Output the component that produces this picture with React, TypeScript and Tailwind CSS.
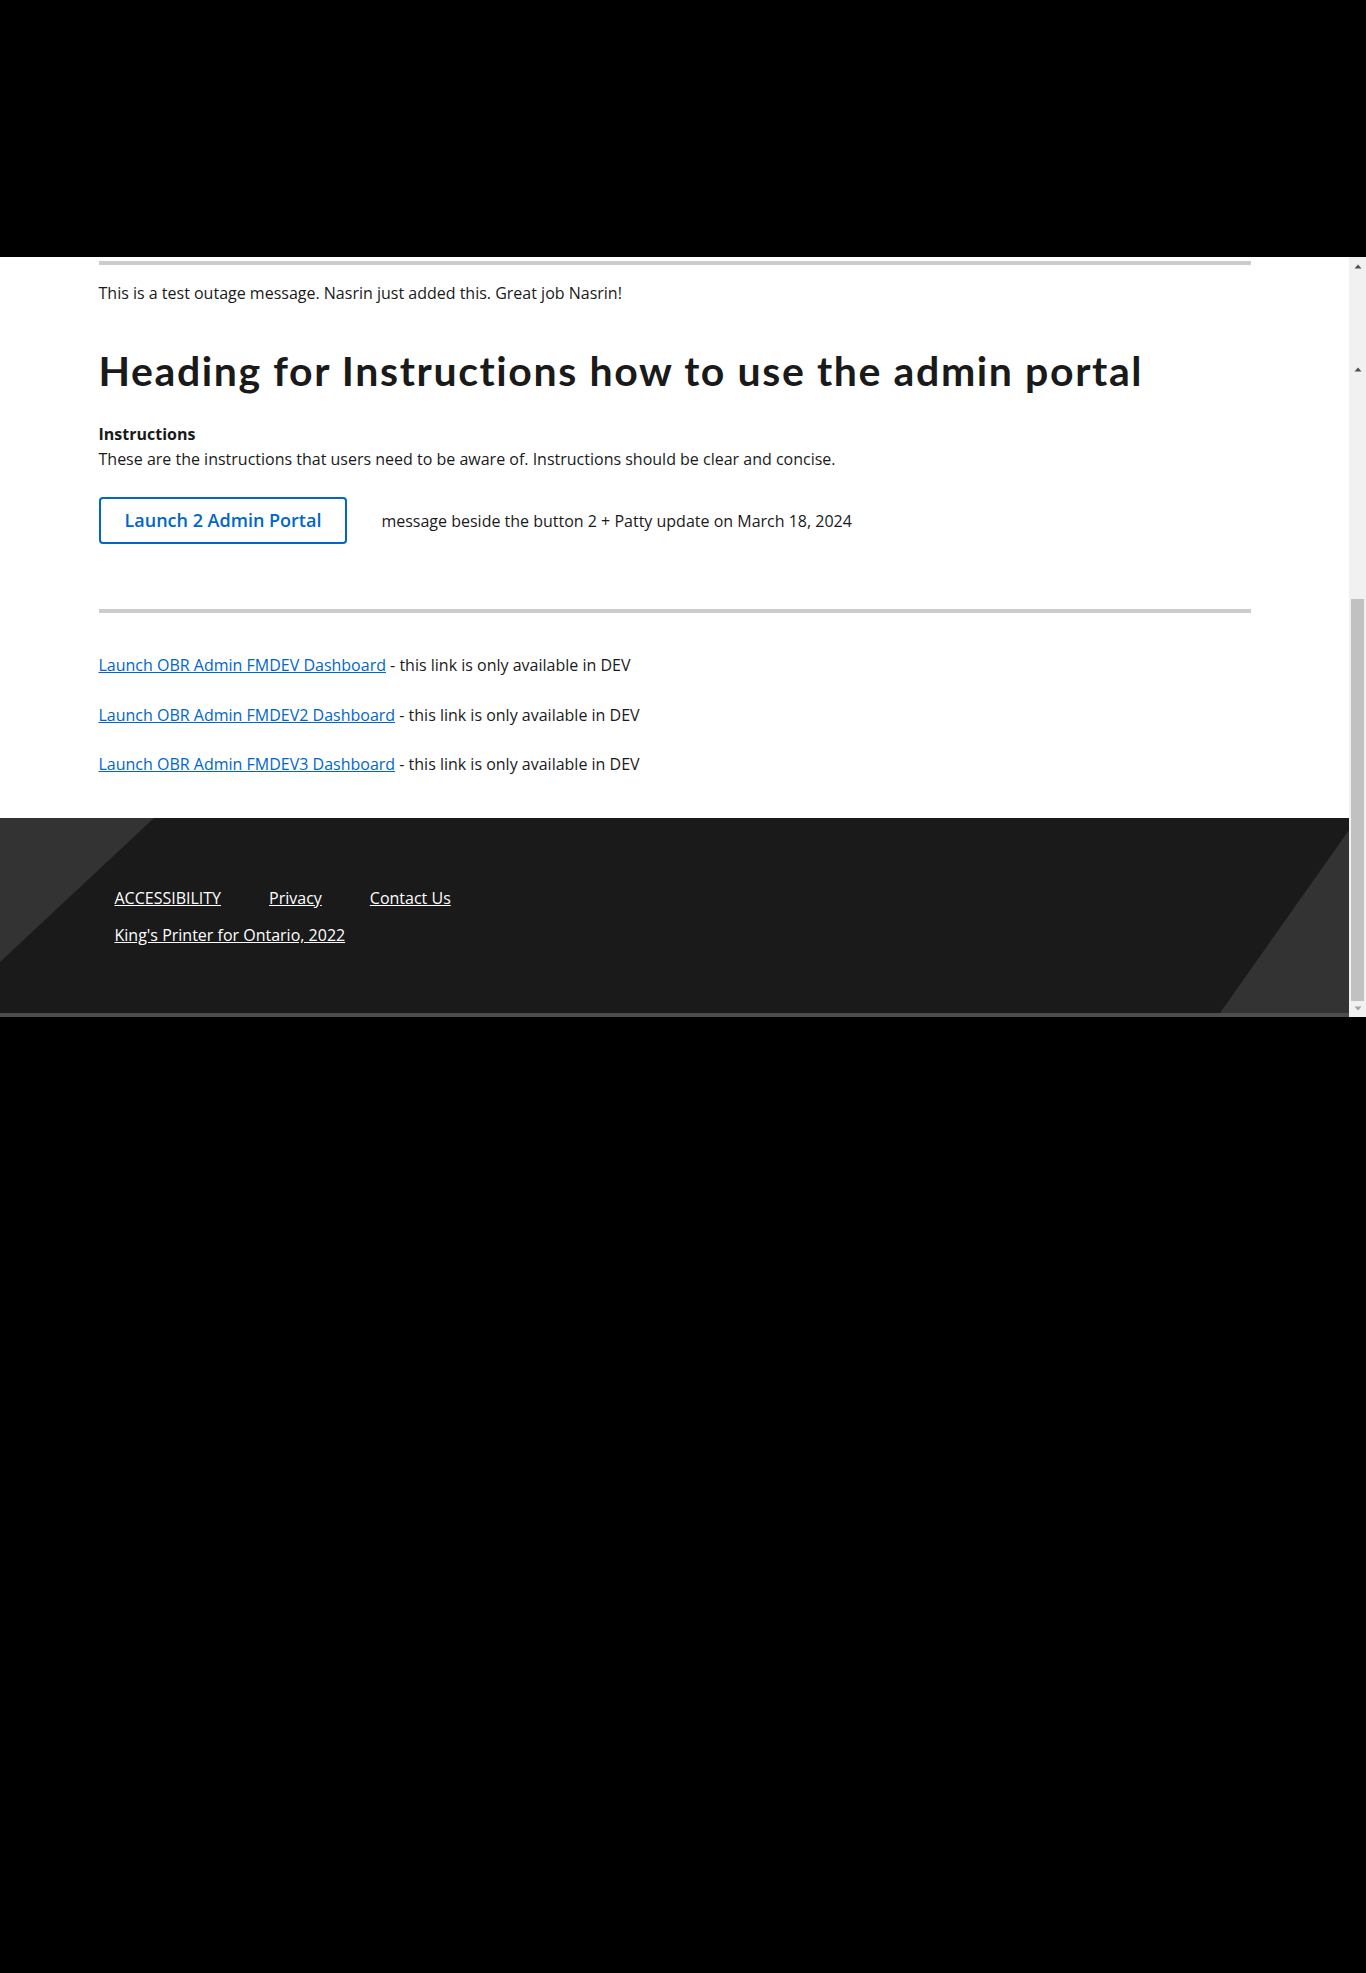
import React from "react";

const body = "font-['Open_Sans',sans-serif]";

function UpArrow({ color }: { color: string }) {
  return (
    <svg width="8" height="5" viewBox="0 0 8 5" className="block mx-auto">
      <polygon points="0.5,4.5 4,0.5 7.5,4.5" fill={color} />
    </svg>
  );
}

function DownArrow({ color }: { color: string }) {
  return (
    <svg width="8" height="5" viewBox="0 0 8 5" className="block mx-auto">
      <polygon points="0.5,0.5 7.5,0.5 4,4.5" fill={color} />
    </svg>
  );
}

export default function App() {
  const links = [
    "Launch OBR Admin FMDEV Dashboard",
    "Launch OBR Admin FMDEV2 Dashboard",
    "Launch OBR Admin FMDEV3 Dashboard",
  ];
  return (
    <div className={`w-[1366px] h-[1973px] bg-black flex flex-col ${body}`}>
      <div className="h-[257px] shrink-0" />
      <div className="flex h-[760px] shrink-0">
        <div className="flex-1 flex flex-col">
          <main className="bg-white h-[561px] text-[#1a1a1a]">
            <div className="mx-auto w-[1152px]">
              <div className="mt-[4px] h-[4px] bg-[#cccccc]" />
              <p className="mt-[16px] text-[16px] leading-[24px]">
                This is a test outage message. Nasrin just added this. Great job Nasrin!
              </p>
              <h1 className="mt-[42px] font-['Lato',sans-serif] font-bold text-[41px] leading-[48px] tracking-[1.6px] [font-variant-ligatures:none] text-[#1a1a1a]">
                Heading for Instructions how to use the admin portal
              </h1>
              <p className="mt-[27px] text-[16px] leading-[25px] font-bold">Instructions</p>
              <p className="text-[16px] leading-[24px]">
                These are the instructions that users need to be aware of. Instructions should be clear and concise.
              </p>
              <div className="mt-[26px] flex items-center">
                <button className="h-[47px] px-[24px] border-2 border-[#0066cc] rounded-[4px] text-[#0066cc] text-[18px] font-semibold bg-white">
                  Launch 2 Admin Portal
                </button>
                <p className="ml-[34px] text-[16px] leading-[24px]">
                  message beside the button 2 + Patty update on March 18, 2024
                </p>
              </div>
              <div className="mt-[65px] h-[4px] bg-[#cccccc]" />
              <div className="mt-[40px] flex flex-col gap-[25.5px]">
                {links.map((l) => (
                  <p key={l} className="text-[16px] leading-[24px]">
                    <a href="#" className="text-[#0066cc] underline">
                      {l}
                    </a>{" "}
                    - this link is only available in DEV
                  </p>
                ))}
              </div>
            </div>
          </main>
          <footer className="relative h-[199px] bg-[#1a1a1a] border-b-4 border-[#4d4d4d] overflow-hidden">
            <svg
              className="absolute inset-0"
              width="1349"
              height="195"
              viewBox="0 0 1349 195"
              preserveAspectRatio="none"
            >
              <polygon points="0,0 154,0 0,144" fill="#333333" />
              <polygon points="1220,195 1349,12 1349,195" fill="#333333" />
            </svg>
            <div className="relative mx-auto w-[1152px] px-4 pt-[68px] text-white text-[16px] leading-[24px]">
              <ul className="flex gap-[48px]">
                <li>
                  <a href="#" className="underline">ACCESSIBILITY</a>
                </li>
                <li>
                  <a href="#" className="underline">Privacy</a>
                </li>
                <li>
                  <a href="#" className="underline">Contact Us</a>
                </li>
              </ul>
              <p className="mt-[12.5px]">
                <a href="#" className="underline">King's Printer for Ontario, 2022</a>
              </p>
            </div>
          </footer>
        </div>
        <div className="w-[17px] bg-[#f1f1f1] flex flex-col">
          <div className="mt-[7px]">
            <UpArrow color="#505050" />
          </div>
          <div className="mt-[98px]">
            <UpArrow color="#505050" />
          </div>
          <div className="mt-[227px] mx-[2px] h-[402px] bg-[#c1c1c1]" />
          <div className="mt-[5px]">
            <DownArrow color="#a3a3a3" />
          </div>
        </div>
      </div>
      <div className="flex-1" />
    </div>
  );
}
